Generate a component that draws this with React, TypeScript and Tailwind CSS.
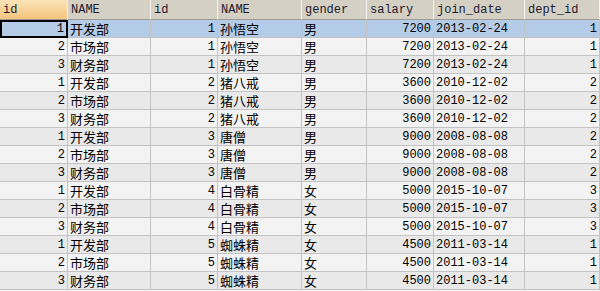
import React from "react";

const rows: [number, string, number, string, string, number, string, number][] = [
  [1, "开发部", 1, "孙悟空", "男", 7200, "2013-02-24", 1],
  [2, "市场部", 1, "孙悟空", "男", 7200, "2013-02-24", 1],
  [3, "财务部", 1, "孙悟空", "男", 7200, "2013-02-24", 1],
  [1, "开发部", 2, "猪八戒", "男", 3600, "2010-12-02", 2],
  [2, "市场部", 2, "猪八戒", "男", 3600, "2010-12-02", 2],
  [3, "财务部", 2, "猪八戒", "男", 3600, "2010-12-02", 2],
  [1, "开发部", 3, "唐僧", "男", 9000, "2008-08-08", 2],
  [2, "市场部", 3, "唐僧", "男", 9000, "2008-08-08", 2],
  [3, "财务部", 3, "唐僧", "男", 9000, "2008-08-08", 2],
  [1, "开发部", 4, "白骨精", "女", 5000, "2015-10-07", 3],
  [2, "市场部", 4, "白骨精", "女", 5000, "2015-10-07", 3],
  [3, "财务部", 4, "白骨精", "女", 5000, "2015-10-07", 3],
  [1, "开发部", 5, "蜘蛛精", "女", 4500, "2011-03-14", 1],
  [2, "市场部", 5, "蜘蛛精", "女", 4500, "2011-03-14", 1],
  [3, "财务部", 5, "蜘蛛精", "女", 4500, "2011-03-14", 1],
];

const headers = ["id", "NAME", "id", "NAME", "gender", "salary", "join_date", "dept_id"];
const numCols = [0, 2, 5, 7];
const mono = { fontFamily: '"Liberation Mono", monospace' } as const;
const cjk = { fontFamily: '"Noto Sans CJK SC", "Noto Sans", sans-serif' } as const;

export default function App() {
  return (
    <div className="w-[600px] h-[291px] overflow-hidden bg-[#f2f2f2]">
      <div className="grid grid-cols-[68px_83px_67px_84px_65px_67px_91px_75px] text-black">
        {headers.map((h, i) => (
          <div
            key={"h" + i}
            className={
              "h-[20px] border-b border-b-[#9c9a92] border-r border-r-[#f4f3ee] pl-[3px] flex items-center text-[12px] text-[#1c1c30] " +
              (i === 0
                ? "bg-gradient-to-b from-[#fbe3b8] to-[#f4c47c]"
                : "bg-[#d4d0c4]")
            }
            style={mono}
          >
            {h}
          </div>
        ))}
        {rows.map((r, ri) =>
          r.map((v, ci) => {
            const sel = ri === 0;
            const bg = sel ? "bg-[#b5cce9]" : ri % 2 === 0 ? "bg-[#e9e9e9]" : "bg-[#f3f3f3]";
            const isNum = numCols.includes(ci);
            const isDate = ci === 6;
            const border =
              sel && ci === 0
                ? "border-[2px] border-black"
                : "border-r border-b border-[#c3c3c3]";
            return (
              <div
                key={ri + "-" + ci}
                className={
                  "h-[18px] flex items-center overflow-hidden whitespace-nowrap " +
                  bg +
                  " " +
                  border +
                  (isNum ? " justify-end pr-[2px] text-[12px]" : " pl-[2px]") +
                  (isDate ? " text-[12px]" : "") +
                  (!isNum && !isDate ? " text-[13px]" : "")
                }
                style={isNum || isDate ? mono : cjk}
              >
                {v}
              </div>
            );
          })
        )}
      </div>
    </div>
  );
}
